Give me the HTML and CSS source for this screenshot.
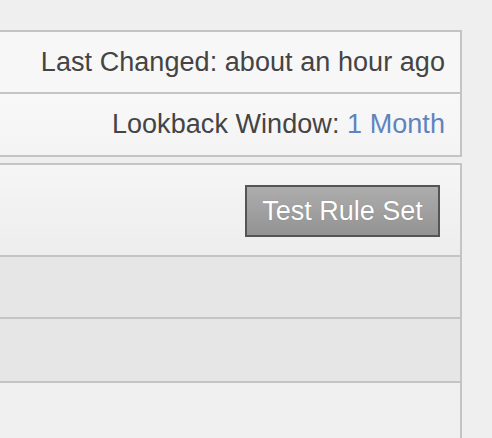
FILE: index.html
```html
<!DOCTYPE html>
<html>
<head>
<meta charset="utf-8">
<link rel="stylesheet" href="styles.css">
</head>
<body>
<div class="page">
  <div class="panel info">
    <div class="row first">Last Changed: about an hour ago</div>
    <div class="row second">Lookback Window: <a class="link" href="#">1 Month</a></div>
  </div>
  <div class="panel rules">
    <div class="action-row">
      <button class="btn" type="button">Test Rule Set</button>
    </div>
    <div class="gray-row r1"></div>
    <div class="gray-row r2"></div>
    <div class="light-row"></div>
  </div>
</div>
</body>
</html>
```
FILE: styles.css
```css
html, body {
  margin: 0;
  padding: 0;
  background: #efefef;
  height: 100%;
  overflow: hidden;
}
.page {
  padding-top: 30px;
  font-family: "Liberation Sans", Arial, sans-serif;
  font-size: 27px;
  letter-spacing: 0.06px;
  color: #444;
}
.panel {
  width: 460px;
  border: 2px solid #c4c4c4;
  border-left: none;
  box-sizing: content-box;
}
.info {
  background: #f7f7f7;
}
.row {
  text-align: right;
  padding-right: 15px;
  line-height: 60px;
  height: 60px;
  white-space: nowrap;
}
.row.first {
  border-bottom: 2px solid #c4c4c4;
}
.row.second {
  height: 61px;
  line-height: 61px;
  background: linear-gradient(#f8f8f8, #f4f4f4);
}
.link {
  color: #5f84bd;
  text-decoration: none;
}
.rules {
  margin-top: 6px;
  border-bottom: none;
}
.action-row {
  display: flex;
  justify-content: flex-end;
  padding: 20px 20px 18px 0;
  background: linear-gradient(#f6f6f6, #ededed);
  border-bottom: 2px solid #c4c4c4;
}
.btn {
  width: 195px;
  height: 52px;
  box-sizing: border-box;
  border: 2px solid #555;
  border-radius: 0;
  background: linear-gradient(#adadad, #939393);
  color: #fff;
  font-family: "Liberation Sans", Arial, sans-serif;
  font-size: 27px;
  padding: 0;
  text-shadow: 0 0 1px rgba(0,0,0,0.25);
}
.gray-row {
  background: #e6e6e6;
  border-bottom: 2px solid #c4c4c4;
}
.gray-row.r1 { height: 60px; }
.gray-row.r2 { height: 62px; }
.light-row {
  height: 55px;
  background: #f0f0f0;
}
```
